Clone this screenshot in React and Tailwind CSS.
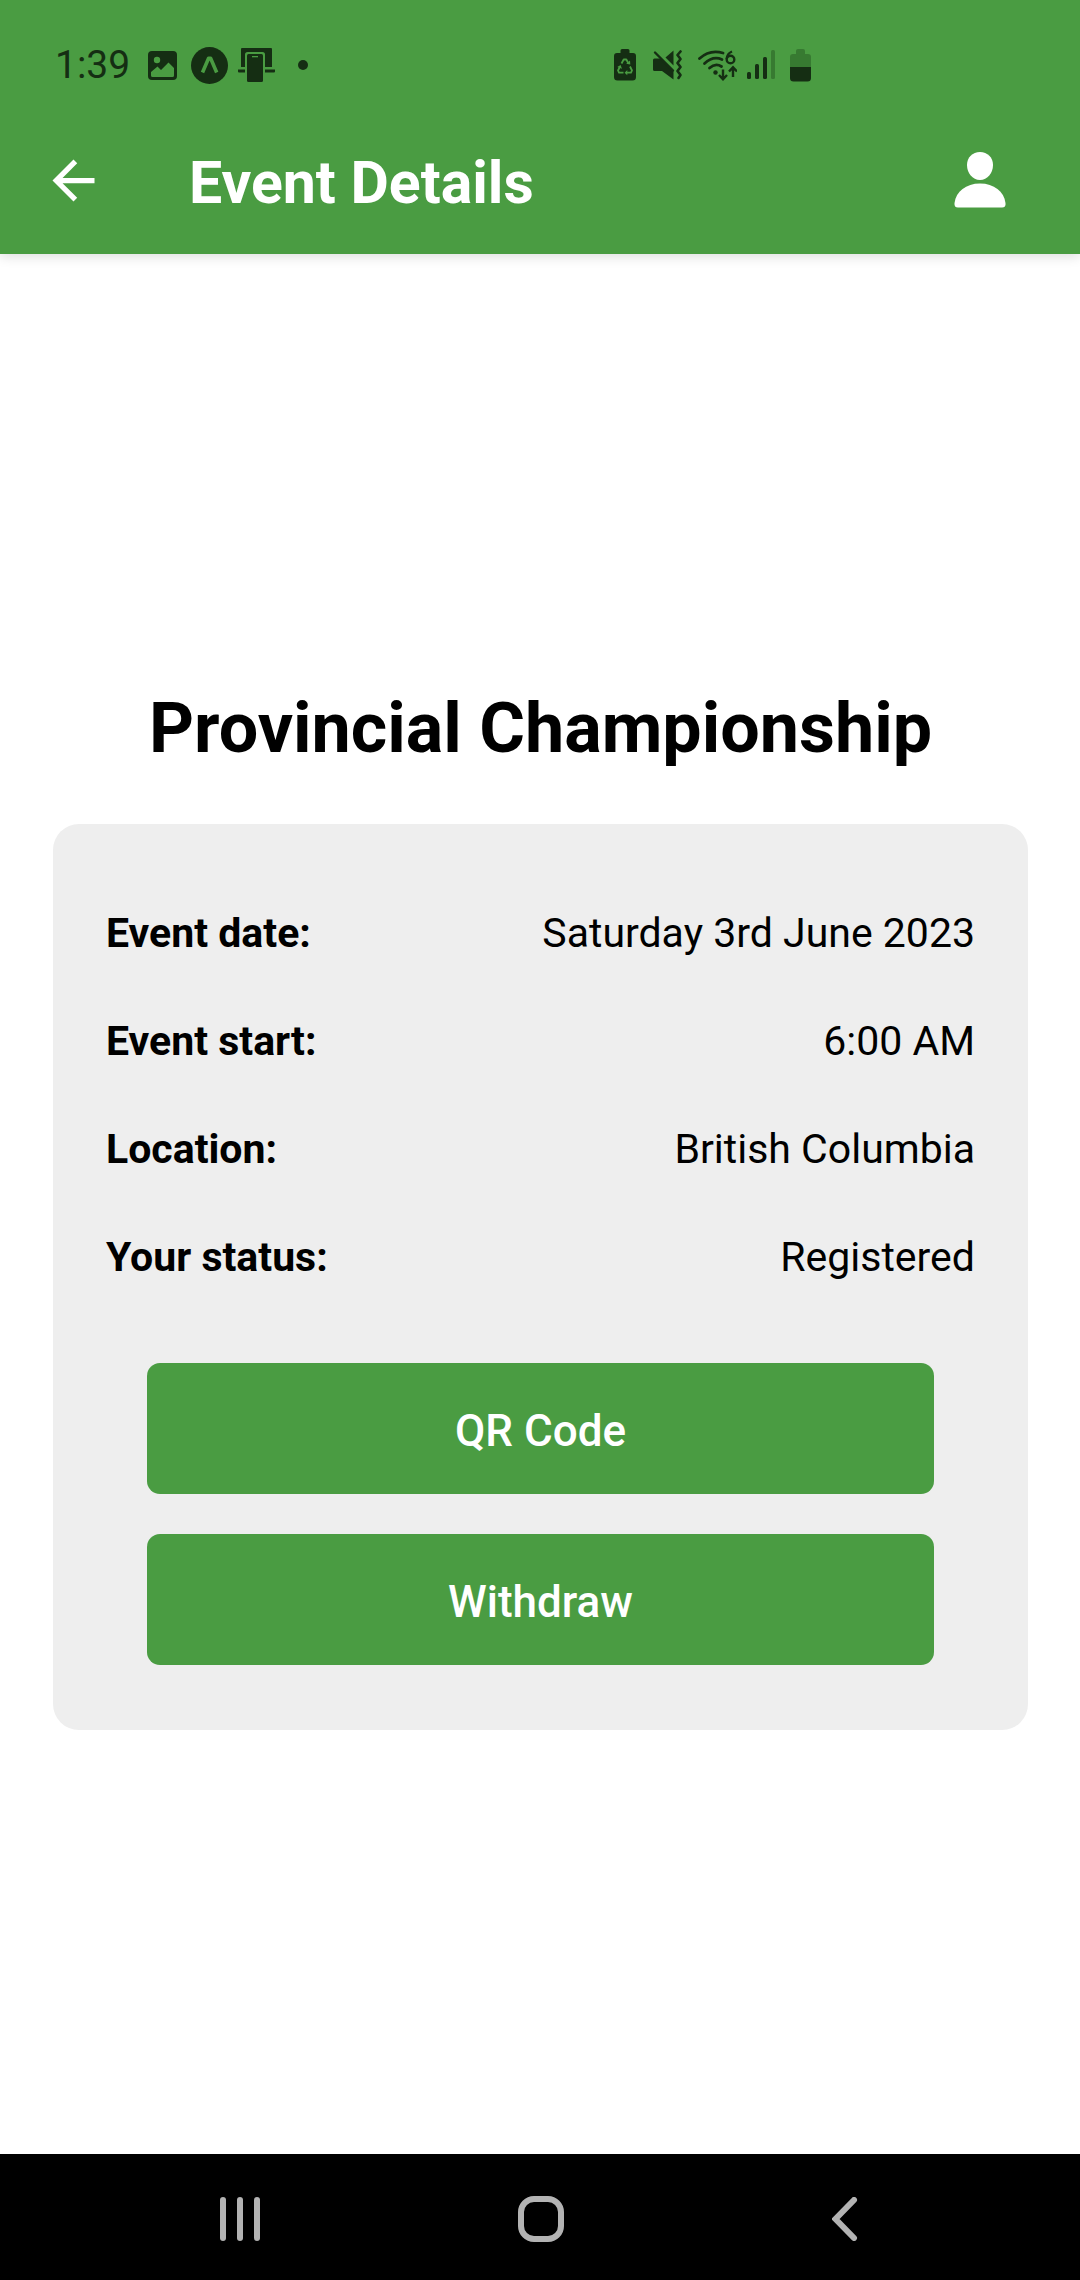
const details = [
  { label: "Event date:", value: "Saturday 3rd June 2023" },
  { label: "Event start:", value: "6:00 AM" },
  { label: "Location:", value: "British Columbia" },
  { label: "Your status:", value: "Registered" },
];

const actions = ["QR Code", "Withdraw"];

function ImageIcon() {
  return (
    <svg width="29" height="29" viewBox="0 0 29 29" aria-hidden="true">
      <rect width="29" height="29" rx="4" fill="#152e13" />
      <circle cx="9" cy="9" r="3.2" fill="#4a9c42" />
      <path d="M3 21 L9.5 15.5 L13 19 L20.5 11.5 L26 17 V24.5 Q26 26 24.5 26 H4.5 Q3 26 3 24.5 Z" fill="#4a9c42" />
    </svg>
  );
}

function ExpoIcon() {
  return (
    <svg width="37" height="37" viewBox="0 0 37 37" aria-hidden="true">
      <circle cx="18.5" cy="18.5" r="18.5" fill="#152e13" />
      <path d="M11.5 25.5 L17.6 11.3 H19.6 L25.7 25.5" fill="none" stroke="#4a9c42" strokeWidth="3.6" strokeLinejoin="round" />
    </svg>
  );
}

function DevicesIcon() {
  return (
    <svg width="37" height="34" viewBox="0 0 37 34" fill="#152e13" aria-hidden="true">
      <path d="M4 0 H33 Q34 0 34 1 V19 H27 V6.5 Q27 4 24.500 4 H9.5 Q7 4 7 6.5 V19 H3 V1 Q3 0 4 0 Z" />
      <path d="M0 21.5 H7 V24.5 H1 Q0 24.5 0 23.5 Z M27 21.5 H37 V23.5 Q37 24.5 36 24.5 H27 Z" />
      <rect x="9" y="6" width="16" height="28" rx="1.5" />
      <rect x="14" y="8" width="6" height="1.3" fill="#4a9c42" />
    </svg>
  );
}

function RecycleBatteryIcon() {
  return (
    <svg width="22" height="32" viewBox="0 0 22 32" aria-hidden="true">
      <path d="M6.5 4 V1.5 Q6.5 0 8 0 H14 Q15.5 0 15.5 1.5 V4 H19 Q22 4 22 7 V28 Q22 31.5 18.5 31.5 H3.5 Q0 31.5 0 28 V7 Q0 4 3 4 Z" fill="#152e13" />
      <g fill="none" stroke="#4a9c42" strokeWidth="1.8" strokeLinejoin="round">
        <path d="M7.5 14.5 L9.7 10.5 H12.3 L14.5 14.5" />
        <path d="M16 17.5 L18 21.5 L17 23.7 H12.5" />
        <path d="M9.5 23.7 H5 L4 21.5 L6 17.5" />
      </g>
      <path d="M12.2 14.8 L16.3 15.5 L16 11.5 Z M13.3 21 V26.3 L10.6 23.7 Z M3.3 18 L6.6 16 L8 19.7 Z" fill="#4a9c42" />
    </svg>
  );
}

function MuteIcon() {
  return (
    <svg width="30" height="30" viewBox="0 0 30 30" aria-hidden="true">
      <path d="M0 10 Q0 8.5 1.5 8.5 H8 L20.5 21 V29.5 L9 21 H1.5 Q0 21 0 19.5 Z" fill="#152e13" />
      <path d="M12.5 7.5 L20.5 0.5 V15.5 Z" fill="#152e13" />
      <path d="M2 2.5 L20 20.5" stroke="#152e13" strokeWidth="2.4" strokeLinecap="round" />
      <path d="M27.500 1.500 L24.500 5 L27.500 9 L24.500 13 L27.500 17 L24.500 21 L27.500 25 L25.500 28" fill="none" stroke="#152e13" strokeWidth="2.6" strokeLinecap="round" strokeLinejoin="round" />
    </svg>
  );
}

function WifiIcon() {
  return (
    <svg width="39" height="31" viewBox="0 0 39 31" fill="none" stroke="#152e13" aria-hidden="true">
      <g strokeWidth="2.8" strokeLinecap="round">
        <path d="M1.5 8.5 Q12 -1 25 3" />
        <path d="M6.5 13.5 Q15 5.5 24 9.5" />
        <path d="M11.5 18 Q17.5 12.5 23.5 16.5" />
      </g>
      <circle cx="17.5" cy="22.5" r="2.2" fill="#152e13" stroke="none" />
      <g strokeWidth="2.4">
        <circle cx="32.5" cy="9.5" r="3.8" />
        <path d="M28.7 9 Q29 3.5 34 1.5" />
        <path d="M25 19.5 V29 M21 25 L25 29.3 L29 25" />
        <path d="M35 27 V17.5 M31 21.5 L35 17.3 L39 21.5" />
      </g>
    </svg>
  );
}

function SignalIcon() {
  return (
    <svg width="28" height="30" viewBox="0 0 28 30" fill="#152e13" aria-hidden="true">
      <rect x="0" y="22" width="4" height="7" rx="1.5" />
      <rect x="8" y="14" width="4" height="15" rx="1.5" />
      <rect x="16" y="7" width="4" height="22" rx="1.5" />
      <rect x="24" y="0" width="4" height="29" rx="1.5" fill="#377a31" />
    </svg>
  );
}

function BatteryIcon() {
  return (
    <svg width="21" height="33" viewBox="0 0 21 33" aria-hidden="true">
      <path d="M6 5 V2 Q6 0 8 0 H13 Q15 0 15 2 V5 H18 Q21 5 21 8 V18 H0 V8 Q0 5 3 5 Z" fill="#377a31" />
      <path d="M0 18 H21 V29 Q21 32.5 17.5 32.5 H3.5 Q0 32.5 0 29 Z" fill="#152e13" />
    </svg>
  );
}

function StatusBar() {
  return (
    <div className="flex h-[130px] items-center pl-[55px] text-[#152e13]">
      <span className="w-[93px] text-[39px] leading-none">1:39</span>
      <div className="flex flex-1 items-center">
        <ImageIcon />
        <span className="ml-3.5"><ExpoIcon /></span>
        <span className="ml-2.5"><DevicesIcon /></span>
        <span className="ml-[23px] size-2.5 rounded-full bg-[#152e13]" />
      </div>
      <div className="flex items-center pr-[269px]">
        <RecycleBatteryIcon />
        <span className="ml-[17px]"><MuteIcon /></span>
        <span className="ml-[15px]"><WifiIcon /></span>
        <span className="ml-2.5"><SignalIcon /></span>
        <span className="ml-[15px]"><BatteryIcon /></span>
      </div>
    </div>
  );
}

function AppBar() {
  return (
    <div className="flex h-[124px] items-start pl-[42px] pr-[74px]">
      <button type="button" aria-label="Back" className="mt-[19px] shrink-0">
        <svg width="63" height="63" viewBox="0 0 24 24" fill="white" aria-hidden="true">
          <path d="M20 11H7.83l5.59-5.59L12 4l-8 8 8 8 1.41-1.41L7.83 13H20v-2z" />
        </svg>
      </button>
      <h1 className="ml-[84px] mt-4 flex-1 text-[59px] font-bold leading-[74px] text-white">Event Details</h1>
      <button type="button" aria-label="Profile" className="mt-[22px] shrink-0">
        <svg width="52" height="56" viewBox="0 0 52 56" fill="white" aria-hidden="true">
          <path d="M26 0 C33.5 0 39 5.5 39 13 C39 21 33.5 28 26 28 C18.5 28 13 21 13 13 C13 5.5 18.5 0 26 0 Z" />
          <path d="M26 31.5 C40 31.5 50 39.5 51.5 51 Q52 55.5 48 55.5 H4 Q0 55.5 0.5 51 C2 39.5 12 31.5 26 31.5 Z" />
        </svg>
      </button>
    </div>
  );
}

function NavBar() {
  return (
    <nav className="grid h-[126px] grid-cols-[1fr_auto_1fr] items-center bg-black pl-[220px] pr-[218px] pt-1">
      <button type="button" aria-label="Recent apps" className="justify-self-start">
        <svg width="42" height="44" viewBox="0 0 42 44" fill="#b3b3b3" aria-hidden="true">
          <rect x="0" width="6" height="44" rx="3" />
          <rect x="17" width="6" height="44" rx="3" />
          <rect x="34" width="6" height="44" rx="3" />
        </svg>
      </button>
      <button type="button" aria-label="Home">
        <svg width="46" height="46" viewBox="0 0 46 46" aria-hidden="true">
          <rect x="3" y="3" width="40" height="40" rx="13" fill="none" stroke="#b3b3b3" strokeWidth="6" />
        </svg>
      </button>
      <button type="button" aria-label="Back" className="justify-self-end">
        <svg width="30" height="44" viewBox="0 0 30 44" aria-hidden="true">
          <path d="M22 3 L3.5 22 L22 41" fill="none" stroke="#b3b3b3" strokeWidth="6" strokeLinecap="round" />
        </svg>
      </button>
    </nav>
  );
}

export default function App() {
  return (
    <div className="flex min-h-screen flex-col bg-white font-['Roboto',sans-serif] text-black">
      <header className="bg-[#4a9c42] shadow-[0_2px_12px_rgba(0,0,0,0.14)]">
        <StatusBar />
        <AppBar />
      </header>
      <main className="flex flex-1 flex-col justify-center pl-[53px] pr-[52px]">
        <h2 className="text-center text-[70px] font-bold leading-[100px]">Provincial Championship</h2>
        <section className="mt-[46px] rounded-[26px] bg-[#eeeeee] px-[53px] pb-[65px] pt-14">
          <dl>
            {details.map(({ label, value }) => (
              <div key={label} className="flex h-[108px] items-center justify-between text-[41px]">
                <dt className="font-bold">{label}</dt>
                <dd>{value}</dd>
              </div>
            ))}
          </dl>
          <div className="mt-[51px] flex flex-col gap-10 px-[41px]">
            {actions.map((action) => (
              <button key={action} type="button" className="h-[131px] rounded-[13px] bg-[#4a9c42] pt-1 text-[44px] font-medium text-white">
                {action}
              </button>
            ))}
          </div>
        </section>
      </main>
      <NavBar />
    </div>
  );
}
